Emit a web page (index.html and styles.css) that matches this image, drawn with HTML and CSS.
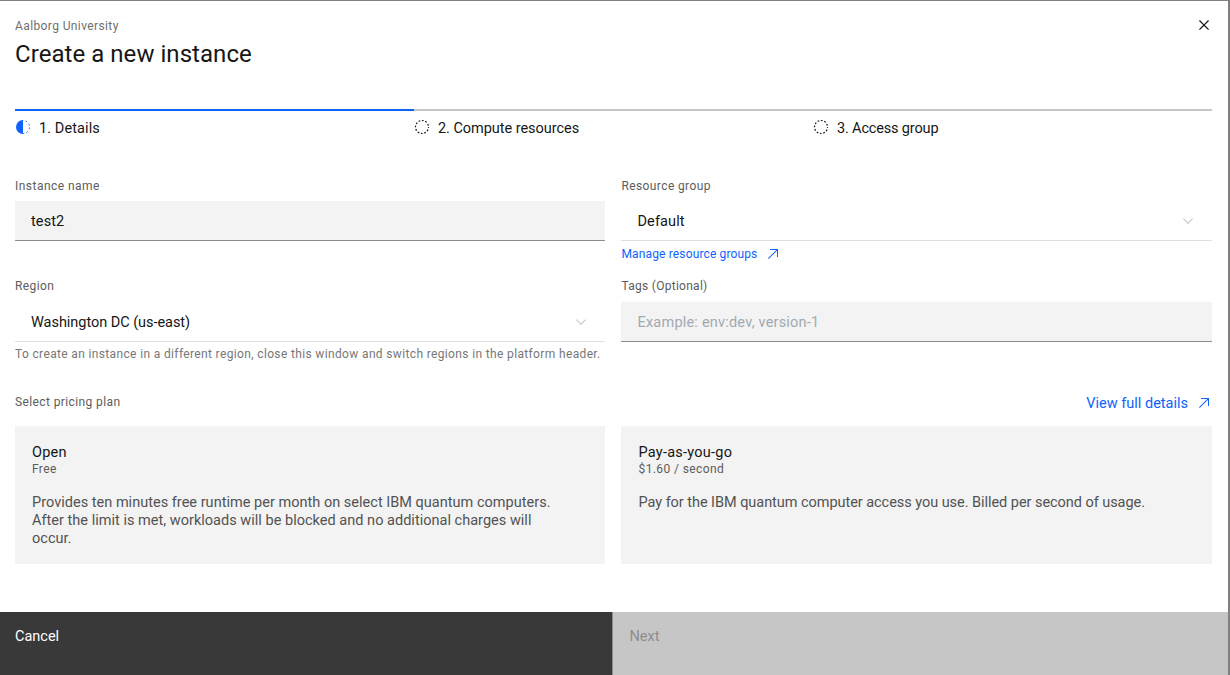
FILE: index.html
```html
<!DOCTYPE html>
<html lang="en">
<head>
<meta charset="utf-8">
<title>Create a new instance</title>
<link rel="stylesheet" href="styles.css">
</head>
<body>
<div class="modal">
  <header class="header">
    <div>
      <p class="label org">Aalborg University</p>
      <h1 class="title">Create a new instance</h1>
    </div>
    <button class="close" aria-label="Close"><svg width="20" height="20" viewBox="0 0 32 32"><path d="M24 9.4 22.6 8 16 14.6 9.4 8 8 9.4 14.6 16 8 22.6 9.4 24 16 17.4 22.6 24 24 22.6 17.4 16z"/></svg></button>
  </header>

  <ol class="steps">
    <li class="step step-current">
      <svg width="16" height="16" viewBox="0 0 16 16"><path d="M8 1a7 7 0 0 0 0 14z" fill="#0f62fe"/><path d="M8 1.5a6.5 6.5 0 0 1 0 13" fill="none" stroke="#0f62fe" stroke-dasharray="1.7 2.3" stroke-dashoffset="-2.6"/></svg>
      <span class="step-details">1. Details</span>
    </li>
    <li class="step">
      <svg width="16" height="16" viewBox="0 0 16 16"><circle cx="8" cy="8" r="6.5" fill="none" stroke="#161616" stroke-width="1.2" stroke-dasharray="1.7 1.703" stroke-dashoffset=".85"/></svg>
      <span class="step-compute">2. Compute resources</span>
    </li>
    <li class="step">
      <svg width="16" height="16" viewBox="0 0 16 16"><circle cx="8" cy="8" r="6.5" fill="none" stroke="#161616" stroke-width="1.2" stroke-dasharray="1.7 1.703" stroke-dashoffset=".85"/></svg>
      <span class="step-access">3. Access group</span>
    </li>
  </ol>

  <div class="form">
    <div class="field">
      <span class="label name-label">Instance name</span>
      <div class="control filled"><span class="name-value">test2</span></div>
    </div>
    <div class="field">
      <span class="label">Resource group</span>
      <div class="control select"><span class="group-value">Default</span><svg width="16" height="16" viewBox="0 0 16 16"><path d="M8 11 3 6l.7-.7L8 9.6l4.3-4.3.7.7z"/></svg></div>
      <a class="link small"><span>Manage resource groups</span><svg width="16" height="16" viewBox="0 0 32 32"><path d="M10 6v2h12.6L6 24.6 7.4 26 24 9.4V22h2V6z"/></svg></a>
    </div>
    <div class="field">
      <span class="label">Region</span>
      <div class="control select"><span class="region-value">Washington DC (us-east)</span><svg width="16" height="16" viewBox="0 0 16 16"><path d="M8 11 3 6l.7-.7L8 9.6l4.3-4.3.7.7z"/></svg></div>
      <p class="helper">To create an instance in a different region, close this window and switch regions in the platform header.</p>
    </div>
    <div class="field">
      <span class="label tags-label">Tags (Optional)</span>
      <div class="control filled placeholder"><span>Example: env:dev, version-1</span></div>
    </div>
  </div>

  <div class="plans-head">
    <span class="label">Select pricing plan</span>
    <a class="link"><span>View full details</span><svg width="16" height="16" viewBox="0 0 32 32"><path d="M10 6v2h12.6L6 24.6 7.4 26 24 9.4V22h2V6z"/></svg></a>
  </div>
  <div class="plans">
    <section class="plan">
      <h2 class="plan-name">Open</h2>
      <p class="label price">Free</p>
      <p class="desc">Provides ten minutes free runtime per month on select IBM quantum computers. After the limit is met, workloads will be blocked and no additional charges will occur.</p>
    </section>
    <section class="plan">
      <h2 class="plan-name">Pay-as-you-go</h2>
      <p class="label price">$1.60 / second</p>
      <p class="desc desc-tight">Pay for the IBM quantum computer access you use. Billed per second of usage.</p>
    </section>
  </div>

  <footer class="actions">
    <button class="btn cancel">Cancel</button>
    <button class="btn next">Next</button>
  </footer>
</div>
</body>
</html>
```
FILE: styles.css
```css
* { box-sizing: border-box; }
body { margin: 0; background: #808080; font-family: Roboto, "Liberation Sans", sans-serif; font-size: 14.5px; line-height: 18px; color: #161616; }
h1, h2, p, ol { margin: 0; padding: 0; font-weight: 400; }
button { border: 0; border-radius: 0; padding: 0; background: none; font: inherit; color: inherit; text-align: left; }
svg { display: block; fill: currentColor; flex: none; }

.modal { width: 1228px; height: 674px; margin-top: 1px; background: #fff; display: flex; flex-direction: column; }

.label { font-size: 12px; line-height: 16px; color: #5c5c5c; letter-spacing: .39px; }
.org { color: #6f6f6f; }

.header { display: flex; justify-content: space-between; height: 108px; padding: 17px 14px 0 15px; }
.title { font-size: 24px; line-height: 32px; margin-top: 4px; letter-spacing: .05px; }
.close { width: 20px; height: 20px; margin-top: -3px; }

.steps { display: grid; grid-template-columns: repeat(3, 399px); margin-left: 15px; list-style: none; }
.step { display: flex; gap: 8px; height: 29px; padding-top: 8px; border-top: 2px solid #c6c6c6; }
.step span { padding-top: 1px; }
.step-current { border-color: #0f62fe; }
.step-details { letter-spacing: .1px; }
.step-compute { letter-spacing: -.04px; }
.step-access { letter-spacing: -.16px; }

.form { display: grid; grid-template-columns: 590px 591px; grid-template-rows: 100px 116px; column-gap: 16px; margin: 40px 0 0 15px; }
.field { display: flex; flex-direction: column; }
.name-label { letter-spacing: .47px; }
.name-value, .group-value { letter-spacing: .1px; }
.region-value { letter-spacing: -.04px; }
.tags-label { letter-spacing: .27px; }
.field:nth-child(even) > .label, .field:nth-child(even) > .link { padding-left: .5px; }
.control { display: flex; align-items: center; justify-content: space-between; height: 40px; margin-top: 7px; padding: 0 16px; border-bottom: 1px solid #e0e0e0; }
.control span { padding-top: 2px; }
.field:nth-child(even) .control span { padding-left: .5px; }
.field:nth-child(n+3) .control { margin-top: 8px; }
.select svg { color: #c6c6c6; }
.filled { background: #f3f3f3; border-bottom-color: #8d8d8d; }
.placeholder { color: #a2a9b0; letter-spacing: .21px; }
.helper { margin-top: 4px; font-size: 12px; line-height: 16px; letter-spacing: .355px; color: #777; white-space: nowrap; }
.link { display: flex; align-items: center; gap: 8px; color: #0f62fe; }
.small { margin-top: 4px; font-size: 12px; line-height: 18px; letter-spacing: .14px; }

.plans-head { display: flex; justify-content: space-between; height: 32px; padding: 0 16px 0 15px; }
.plans-head .link { height: 18px; }
.plans-head .link span { padding-top: 2px; }
.plans { display: grid; grid-template-columns: 590px 591px; column-gap: 16px; height: 138px; margin-left: 15px; }
.plan { padding: 18px 17px 0; background: #f3f3f3; }
.plan + .plan { padding-left: 17.5px; }
.plan-name { font-size: 14.5px; letter-spacing: .24px; }
.price { margin: -1px 0 17px; }
.desc { width: 525px; color: #525252; letter-spacing: .02px; }
.desc-tight { letter-spacing: -.045px; }

.actions { display: flex; height: 63px; margin-top: auto; }
.btn { display: block; padding: 0 15px 14px; }
.cancel { width: 612px; background: #393939; color: #fff; }
.next { flex: 1; padding-left: 16.5px; border-left: 1px solid #8d8d8d; background: #c6c6c6; color: #8d8d8d; }
```
